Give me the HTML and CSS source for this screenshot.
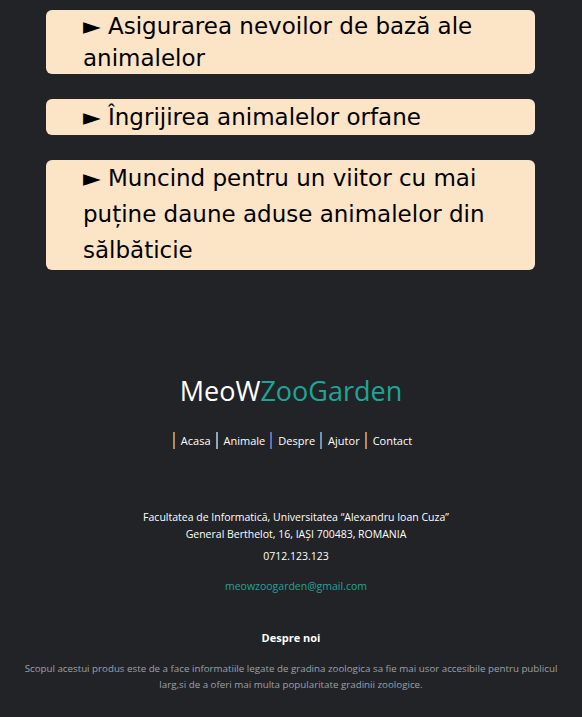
FILE: index.html
```html
<!DOCTYPE html>
<html lang="ro">
<head>
<meta charset="utf-8">
<title>MeoWZooGarden</title>
<link rel="stylesheet" href="styles.css">
</head>
<body>
<main class="goals">
  <div class="goal goal-two">► Asigurarea nevoilor de bază ale animalelor</div>
  <div class="goal goal-one">► Îngrijirea animalelor orfane</div>
  <div class="goal goal-tall">► Muncind pentru un viitor cu mai puține daune aduse animalelor din sălbăticie</div>
</main>
<footer class="footer">
  <div class="logo"><span class="logo-a">MeoW</span><span class="logo-b">ZooGarden</span></div>
  <nav class="nav">
    <a class="nav-link c1" href="#">Acasa</a>
    <a class="nav-link c2" href="#">Animale</a>
    <a class="nav-link c3" href="#">Despre</a>
    <a class="nav-link c4" href="#">Ajutor</a>
    <a class="nav-link c5" href="#">Contact</a>
  </nav>
  <address class="address">
    <p class="addr-lines">Facultatea de Informatică, Universitatea “Alexandru Ioan Cuza”<br>General Berthelot, 16, IAŞI 700483, ROMANIA</p>
    <p class="phone">0712.123.123</p>
    <p class="email">meowzoogarden@gmail.com</p>
  </address>
  <h4 class="about-title">Despre noi</h4>
  <p class="about-text">Scopul acestui produs este de a face informatiile legate de gradina zoologica sa fie mai usor accesibile pentru publicul larg,si de a oferi mai multa popularitate gradinii zoologice.</p>
</footer>
</body>
</html>
```
FILE: styles.css
```css
html, body {
  margin: 0;
  padding: 0;
  background: #222327;
}
body {
  font-family: "Open Sans", "Liberation Sans", sans-serif;
  color: #fff;
}
.goals {
  display: flex;
  flex-direction: column;
  gap: 25px;
  padding: 10px 47px 0 46px;
}
.goal {
  background: #fce4c7;
  border-radius: 6px;
  color: #000;
  font-family: "DejaVu Sans", "Noto Sans", sans-serif;
  font-size: 23px;
  padding: 0 20px 0 37px;
}
.goal-two { line-height: 32px; }
.goal-one { line-height: 36px; }
.goal-tall {
  line-height: 36px;
  padding-top: 0;
  padding-bottom: 2px;
}
.footer {
  display: flex;
  flex-direction: column;
  align-items: center;
  padding-top: 105px;
  text-align: center;
}
.logo {
  font-size: 27px;
  line-height: 32px;
}
.logo-a { color: #fff; }
.logo-b { color: #1fa598; }
.nav {
  display: flex;
  gap: 5px;
  margin-top: 25px;
  padding-left: 3px;
  font-size: 11px;
}
.nav-link {
  color: #fff;
  text-decoration: none;
  border-left: 2px solid #b98a55;
  padding: 1px 0 1px 6px;
  line-height: 15px;
}
.c2 { border-left-color: #8fa7bd; }
.c3 { border-left-color: #5573c9; }
.c4 { border-left-color: #6f95b6; }
.c5 { border-left-color: #c8874a; }
.address {
  font-style: normal;
  font-size: 10.5px;
  line-height: 17px;
  margin-top: 60px;
  padding-left: 10px;
}
.address p { margin: 0; }
.phone { margin-top: 5px !important; }
.email {
  color: #1fa598;
  margin-top: 13px !important;
}
.about-title {
  margin: 35px 0 0;
  font-size: 11px;
  font-weight: 700;
  line-height: 15px;
}
.about-text {
  margin: 16px 0 0;
  padding: 0 12px;
  font-size: 9.75px;
  line-height: 16px;
  color: #9ba0a8;
}
```
